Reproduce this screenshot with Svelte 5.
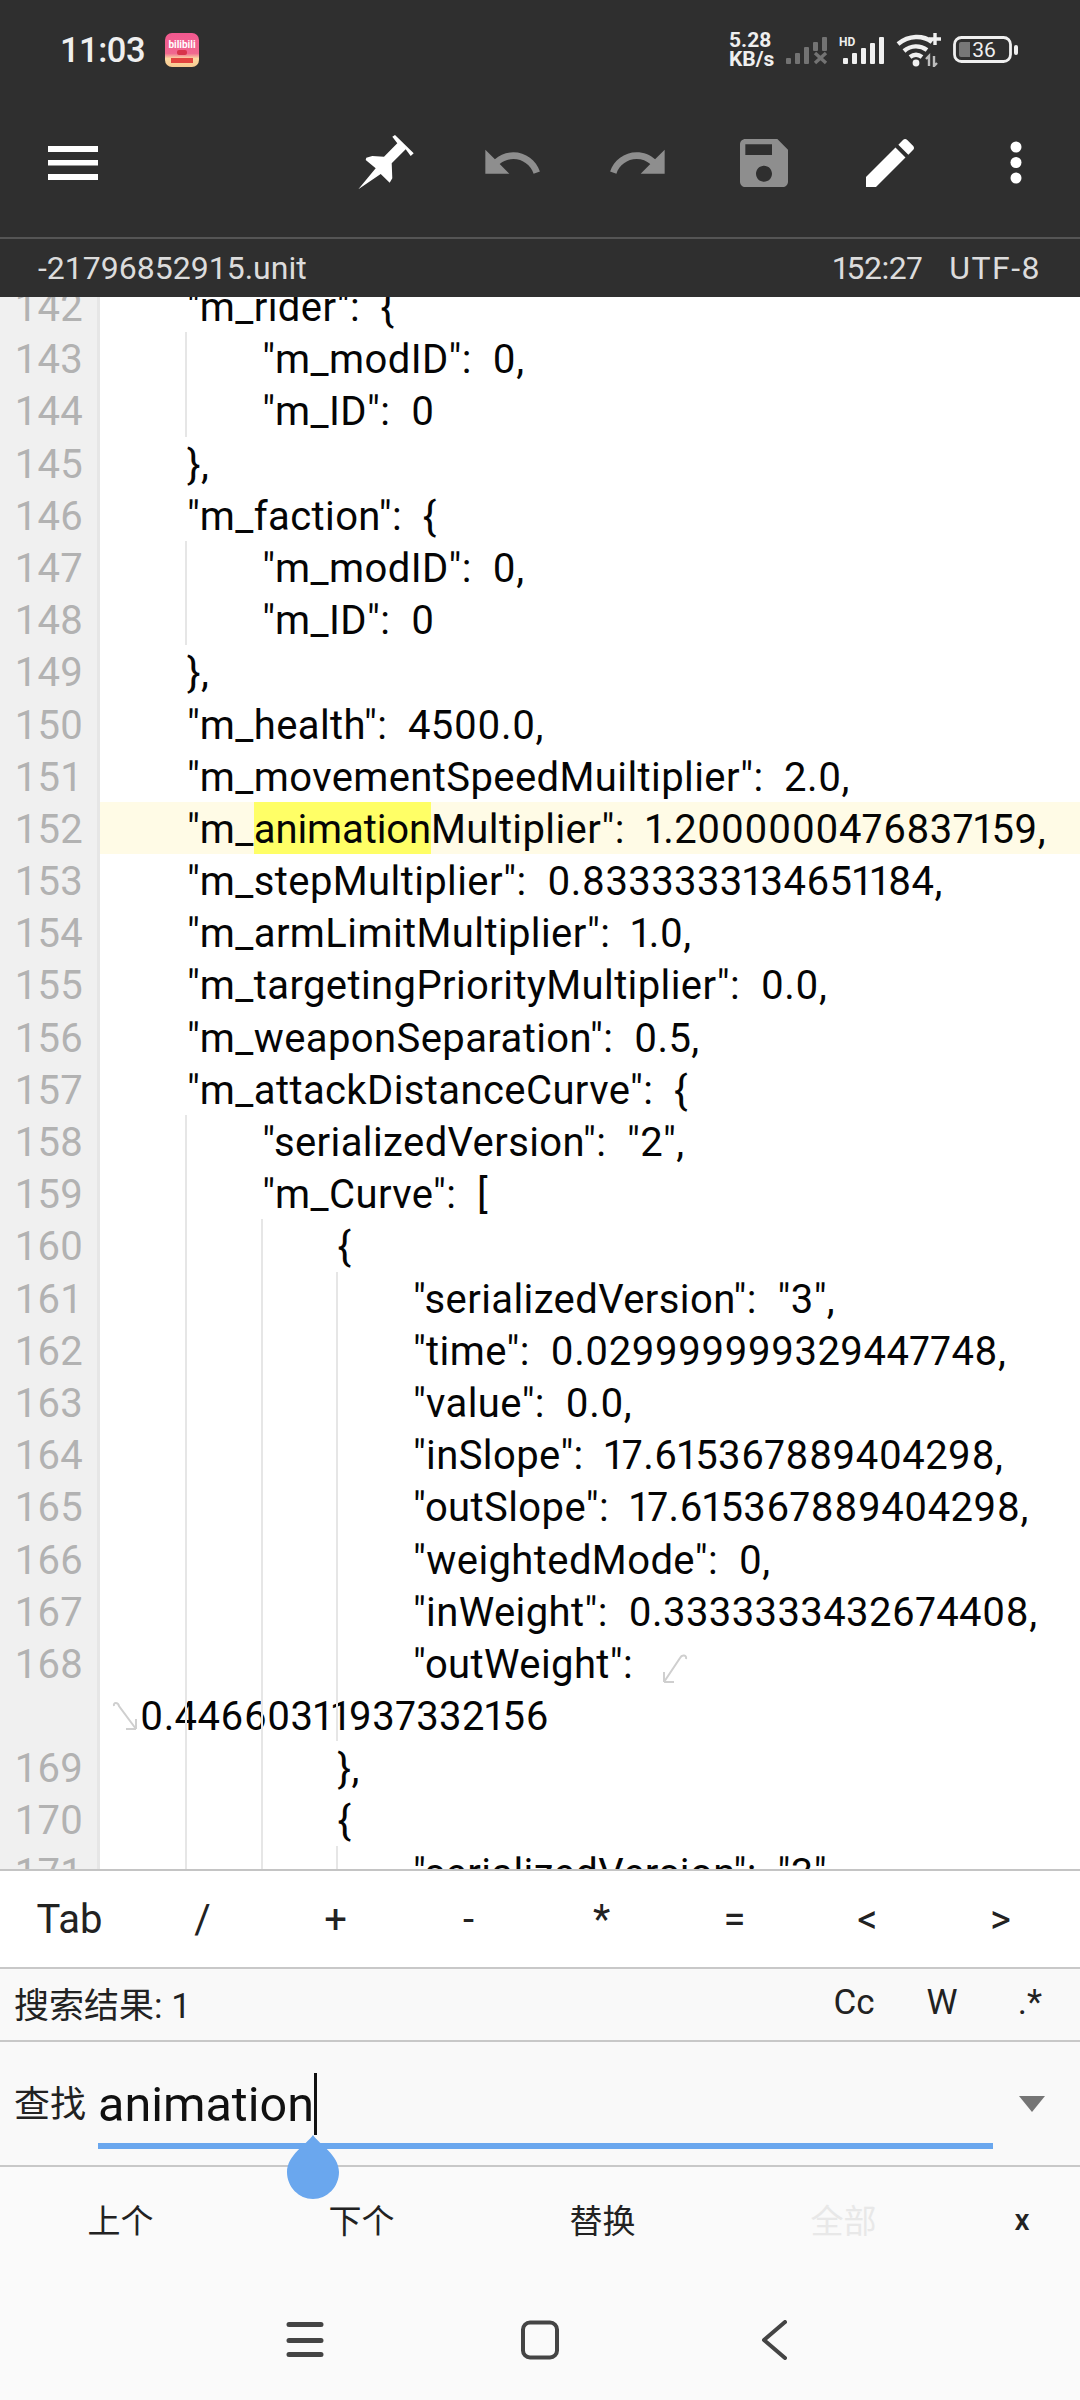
<script>
  const kw = (k, v) => `"${k}":  ${v}`;
  const rows = [
    { n: 142, l: 1, t: kw('m_rider', '{'), g: 0 },
    { n: 143, l: 2, t: kw('m_modID', '0,'), g: 1 },
    { n: 144, l: 2, t: kw('m_ID', '0'), g: 1 },
    { n: 145, l: 1, t: '},', g: 0 },
    { n: 146, l: 1, t: kw('m_faction', '{'), g: 0 },
    { n: 147, l: 2, t: kw('m_modID', '0,'), g: 1 },
    { n: 148, l: 2, t: kw('m_ID', '0'), g: 1 },
    { n: 149, l: 1, t: '},', g: 0 },
    { n: 150, l: 1, t: kw('m_health', '4500.0,'), g: 0 },
    { n: 151, l: 1, t: kw('m_movementSpeedMuiltiplier', '2.0,'), g: 0 },
    { n: 152, l: 1, pre: '"m_', hit: 'animation', t: 'Multiplier":  1.2000000476837159,', g: 0, active: true },
    { n: 153, l: 1, t: kw('m_stepMultiplier', '0.8333333134651184,'), g: 0 },
    { n: 154, l: 1, t: kw('m_armLimitMultiplier', '1.0,'), g: 0 },
    { n: 155, l: 1, t: kw('m_targetingPriorityMultiplier', '0.0,'), g: 0 },
    { n: 156, l: 1, t: kw('m_weaponSeparation', '0.5,'), g: 0 },
    { n: 157, l: 1, t: kw('m_attackDistanceCurve', '{'), g: 0 },
    { n: 158, l: 2, t: kw('serializedVersion', '"2",'), g: 1 },
    { n: 159, l: 2, t: kw('m_Curve', '['), g: 1 },
    { n: 160, l: 3, t: '{', g: 2 },
    { n: 161, l: 4, t: kw('serializedVersion', '"3",'), g: 3 },
    { n: 162, l: 4, t: kw('time', '0.029999999329447748,'), g: 3 },
    { n: 163, l: 4, t: kw('value', '0.0,'), g: 3 },
    { n: 164, l: 4, t: kw('inSlope', '17.615367889404298,'), g: 3 },
    { n: 165, l: 4, t: kw('outSlope', '17.615367889404298,'), g: 3 },
    { n: 166, l: 4, t: kw('weightedMode', '0,'), g: 3 },
    { n: 167, l: 4, t: kw('inWeight', '0.3333333432674408,'), g: 3 },
    { n: 168, l: 4, t: '"outWeight":  ', g: 3, wrapOut: true },
    { n: '', l: 0, t: '0.44660311937332156', g: 3, wrapIn: true },
    { n: 169, l: 3, t: '},', g: 2 },
    { n: 170, l: 3, t: '{', g: 2 },
    { n: 171, l: 4, t: kw('serializedVersion', '"3"'), g: 3 }
  ];
  const keys = ['Tab', '/', '+', '-', '*', '=', '<', '>'];
  const indent = 75.3;
</script>

<div class="screen">
  <header class="top">
    <div class="status">
      <div class="left">
        <span class="time">11:03</span>
        <svg class="bili" viewBox="0 0 34 34" aria-hidden="true">
          <defs>
            <linearGradient id="bg" x1="0" y1="0" x2="0" y2="1">
              <stop offset="0" stop-color="#f2588f" />
              <stop offset="0.6" stop-color="#f0688f" />
              <stop offset="0.75" stop-color="#fbd9a2" />
              <stop offset="1" stop-color="#f9c98f" />
            </linearGradient>
          </defs>
          <rect width="34" height="34" rx="7" fill="url(#bg)" />
          <text x="17" y="15" text-anchor="middle" class="bili-t">bilibili</text>
          <rect x="12" y="17" width="10" height="5" rx="2" fill="#d8344a" />
          <rect x="6" y="25" width="22" height="5" fill="#e2443f" />
        </svg>
      </div>
      <div class="right">
        <div class="speed"><span>5.28</span><span>KB/s</span></div>
        <svg class="sig" width="42" height="28" viewBox="0 0 42 28" aria-hidden="true">
          <g fill="#737373">
            <rect x="0" y="21" width="5" height="6" rx="1" />
            <rect x="9" y="16" width="5" height="11" rx="1" />
            <rect x="18" y="10" width="5" height="17" rx="1" />
            <rect x="27" y="5" width="5" height="9" rx="1" />
            <rect x="36" y="0" width="5" height="14" rx="1" />
          </g>
          <path d="M29 16l11 10M40 16L29 26" stroke="#737373" stroke-width="3.4" />
        </svg>
        <div class="hd">
          <span class="hd-t">HD</span>
          <svg width="42" height="28" viewBox="0 0 42 28" aria-hidden="true">
            <g fill="#f0f0f0">
              <rect x="0" y="21" width="5" height="6" rx="1" />
              <rect x="9" y="16" width="5" height="11" rx="1" />
              <rect x="18" y="11" width="5" height="16" rx="1" />
              <rect x="27" y="6" width="5" height="21" rx="1" />
              <rect x="36" y="0" width="5" height="27" rx="1" />
            </g>
          </svg>
        </div>
        <svg class="wifi" width="46" height="34" viewBox="0 0 46 34" aria-hidden="true">
          <g fill="none" stroke="#f0f0f0" stroke-width="4.4">
            <path d="M2 11C13 2 27 2 36 9" />
            <path d="M8 18C15 12 24 12 31 17" />
            <path d="M14 24c4-3 8-3 12 0" />
          </g>
          <circle cx="20" cy="30" r="3.4" fill="#f0f0f0" />
          <path d="M39 0v12M33 6h12" stroke="#f0f0f0" stroke-width="3.4" />
          <path d="M33 33V23l-3 3M38 23v10l3-3" fill="none" stroke="#bdbdbd" stroke-width="2.4" />
        </svg>
        <svg class="batt" width="66" height="28" viewBox="0 0 66 28" aria-hidden="true">
          <rect x="1.5" y="1.5" width="56" height="24" rx="7" fill="none" stroke="#f0f0f0" stroke-width="2.8" />
          <path d="M8 6h9v15H8a2 2 0 0 1-2-2V8a2 2 0 0 1 2-2z" fill="#777" />
          <text x="31" y="21" text-anchor="middle" class="batt-t">36</text>
          <rect x="61" y="9" width="4" height="10" rx="2" fill="#f0f0f0" />
        </svg>
      </div>
    </div>

    <nav class="toolbar">
      <button class="tb" aria-label="menu">
        <svg width="64" height="64" viewBox="0 0 64 64"><path d="M7 15h50v6H7zM7 29h50v5.500H7zM7 43h50v6H7z" fill="#fff" /></svg>
      </button>
      <div class="tb-group">
        <button class="tb" aria-label="pin">
          <svg width="64" height="64" viewBox="0 0 64 64"><path d="M4.300 58.300L21.700 37.300 11.700 29 12.300 26.700 18.300 25 30 25.700 43.300 12.300 38.300 5.700 41 4 59.700 22.300 56.700 25 51.700 18.300 37.700 32.300 38.300 47.300 35.700 51.700 26.700 43z" fill="#fff" /></svg>
        </button>
        <button class="tb" aria-label="undo">
          <svg width="64" height="64" viewBox="0 0 24 24"><path fill="#8e8e8e" d="M12.500 8c-2.650 0-5.050.99-6.900 2.600L2 7v9h9l-3.620-3.620c1.390-1.160 3.160-1.880 5.120-1.880 3.540 0 6.550 2.310 7.600 5.500l2.370-.78C21.080 11.030 17.150 8 12.500 8z" /></svg>
        </button>
        <button class="tb" aria-label="redo">
          <svg width="64" height="64" viewBox="0 0 24 24"><path fill="#8e8e8e" d="M18.400 10.600C16.550 8.990 14.150 8 11.500 8c-4.650 0-8.580 3.030-9.960 7.220L3.900 16c1.050-3.190 4.050-5.500 7.600-5.500 1.950 0 3.730.72 5.120 1.880L13 16h9V7l-3.600 3.600z" /></svg>
        </button>
        <button class="tb" aria-label="save">
          <svg width="64" height="64" viewBox="0 0 24 24"><path fill="#8e8e8e" d="M17 3H5c-1.110 0-2 .9-2 2v14c0 1.100.89 2 2 2h14c1.100 0 2-.9 2-2V7l-4-4zm-5 16c-1.660 0-3-1.340-3-3s1.340-3 3-3 3 1.340 3 3-1.340 3-3 3zm3-10H5V5h10v4z" /></svg>
        </button>
        <button class="tb" aria-label="edit">
          <svg width="64" height="64" viewBox="0 0 24 24"><path fill="#fff" d="M3 17.250V21h3.750L17.810 9.940l-3.750-3.750L3 17.250zM20.710 7.040c.39-.39.39-1.020 0-1.410l-2.340-2.340c-.39-.39-1.020-.39-1.410 0l-1.830 1.830 3.750 3.750 1.830-1.830z" /></svg>
        </button>
        <button class="tb" aria-label="more">
          <svg width="64" height="64" viewBox="0 0 64 64"><circle cx="32" cy="16" r="5.500" fill="#fff" /><circle cx="32" cy="31.500" r="5.500" fill="#fff" /><circle cx="32" cy="47" r="5.500" fill="#fff" /></svg>
        </button>
      </div>
    </nav>

    <div class="filebar">
      <span>-21796852915.unit</span>
      <div class="fileinfo"><span class="pos">152:27</span><span class="enc">UTF-8</span></div>
    </div>
  </header>

  <main class="editor">
    <div class="rows">
      {#each rows as r}
        <div class="row" class:active={r.active}>
          <div class="num">{r.n}</div>
          <div class="code" class:wrapped={r.wrapIn} style={r.wrapIn ? '' : `padding-left:${(r.l - 1) * indent + 87}px`}>
            {#each Array(r.g) as _, i}
              <span class="guide" style={`left:${85 + i * 75.6}px`}></span>
            {/each}
            {#if r.wrapIn}
              <svg class="wrap-in" width="26" height="30" viewBox="0 0 26 30" aria-hidden="true">
                <path d="M2 5c-1-4 4-4 5 0L24 28M24 28v-10M24 28H14" fill="none" stroke="#cfcfcf" stroke-width="2" />
              </svg>
            {/if}
            {#if r.pre}<span>{r.pre}</span><span class="hit">{r.hit}</span>{/if}<span>{r.t}</span>{#if r.wrapOut}<svg class="wrap-out" width="26" height="30" viewBox="0 0 26 30" aria-hidden="true">
                <path d="M24 5c1-4-4-5-6-1L2 28M2 28V18M2 28h10" fill="none" stroke="#cfcfcf" stroke-width="2" />
              </svg>{/if}
          </div>
        </div>
      {/each}
    </div>
  </main>

  <section class="keys">
    {#each keys as k}<span class="key">{k}</span>{/each}
  </section>

  <section class="result">
    <span>搜索结果: 1</span>
    <div class="opts"><span>Cc</span><span>W</span><span>.*</span></div>
  </section>

  <section class="find">
    <span class="find-label">查找</span>
    <div class="field">
      <span class="query">animation</span><span class="caret"></span>
    </div>
    <svg class="drop" width="26" height="16" viewBox="0 0 26 16" aria-hidden="true"><path d="M0 0h26L13 16z" fill="#757575" /></svg>
    <svg class="handle" width="52" height="64" viewBox="0 0 52 64" aria-hidden="true">
      <path d="M26 0C32 9 52 20 52 37 52 52 40 64 26 64S0 52 0 37C0 20 20 9 26 0z" fill="#6aa7ee" />
    </svg>
  </section>

  <section class="actions">
    <span>上个</span><span>下个</span><span>替换</span><span class="off">全部</span><span class="close">x</span>
  </section>

  <footer class="nav">
    <svg width="38" height="38" viewBox="0 0 38 38" aria-hidden="true"><path d="M3 4.500h32M3 20.500h32M3 34.500h32" stroke="#444" stroke-width="5" stroke-linecap="round" /></svg>
    <svg class="home" width="38" height="40" viewBox="0 0 38 40" aria-hidden="true"><rect x="2" y="2.500" width="34" height="35" rx="7" fill="none" stroke="#444" stroke-width="4" /></svg>
    <svg class="back" width="26" height="40" viewBox="0 0 26 40" aria-hidden="true"><path d="M24 2L3 20l21 18" fill="none" stroke="#444" stroke-width="4" stroke-linecap="round" stroke-linejoin="round" /></svg>
  </footer>
</div>

<style>
  :global(body) {
    margin: 0;
    background: #fafafa;
  }
  .screen {
    width: 1080px;
    height: 2400px;
    display: flex;
    flex-direction: column;
    overflow: hidden;
    font-family: Roboto, "Noto Sans CJK SC", sans-serif;
    color: #111;
  }
  .top {
    background: #2f2f2f;
    flex: none;
  }
  .status {
    height: 100px;
    display: flex;
    align-items: center;
    justify-content: space-between;
    padding: 0 61px 0 60px;
  }
  .left {
    display: flex;
    align-items: center;
    gap: 20px;
  }
  .time {
    font-size: 34.500px;
    font-weight: 500;
    color: #efefef;
    letter-spacing: -0.5px;
  }
  .bili {
    width: 34px;
    height: 34px;
  }
  .bili-t {
    font-size: 10px;
    font-weight: 700;
    fill: #fff;
    font-family: Roboto, sans-serif;
  }
  .right {
    display: flex;
    align-items: center;
    gap: 11px;
  }
  .speed {
    display: flex;
    flex-direction: column;
    font-size: 21px;
    font-weight: 700;
    line-height: 19px;
    color: #efefef;
    width: 46px;
    white-space: nowrap;
  }
  .sig {
    margin-top: 2px;
  }
  .hd {
    position: relative;
    margin-top: 2px;
    height: 28px;
  }
  .hd svg {
    display: block;
    margin-left: 4px;
  }
  .hd-t {
    position: absolute;
    left: 0;
    top: -2px;
    font-size: 12px;
    font-weight: 700;
    color: #efefef;
  }
  .batt-t {
    font-size: 21px;
    fill: #f0f0f0;
    font-family: Roboto, sans-serif;
  }
  .toolbar {
    height: 126px;
    padding: 0 1px 11px 10px;
    display: flex;
    justify-content: space-between;
    border-bottom: 2px solid #555;
  }
  .tb-group {
    display: flex;
  }
  .tb {
    width: 126px;
    height: 126px;
    padding: 0;
    border: 0;
    background: none;
    display: flex;
    align-items: center;
    justify-content: center;
  }
  .filebar {
    height: 58px;
    padding: 0 40px 0 38px;
    display: flex;
    justify-content: space-between;
    align-items: center;
    font-size: 32px;
    color: #dcdcdc;
  }
  .fileinfo {
    display: flex;
    gap: 27px;
  }
  .pos {
    font-variant-numeric: proportional-nums;
    letter-spacing: -0.5px;
  }
  .enc {
    letter-spacing: 1.5px;
    margin-right: -1px;
  }
  .editor {
    height: 1572px;
    flex: none;
    overflow: hidden;
    background: #fff;
    border-bottom: 2px solid #c4c4c4;
  }
  .rows {
    margin-top: -17px;
  }
  .row {
    display: flex;
    height: 52.2px;
    line-height: 55px;
    font-size: 40px;
  }
  .num {
    flex: none;
    box-sizing: border-box;
    width: 100px;
    padding-right: 14px;
    text-align: right;
    background: #f0f0f0;
    border-right: 3px solid #e6e6e6;
    color: #b2b2b2;
    letter-spacing: 0.25px;
  }
  .code {
    position: relative;
    flex: 1;
    min-width: 0;
    white-space: nowrap;
    color: #050505;
    letter-spacing: 0.4px;
    font-variant-numeric: proportional-nums;
  }
  .code span {
    white-space: pre;
  }
  .code.wrapped {
    padding-left: 40px;
  }
  .active .code {
    background: #fffbe6;
  }
  .hit {
    background: #ffff66;
    display: inline-block;
    height: 52px;
    letter-spacing: -0.1px;
  }
  .guide {
    position: absolute;
    top: 0;
    bottom: 0;
    width: 2px;
    background: #e6e6e6;
  }
  .wrap-in {
    position: absolute;
    left: 12px;
    top: 12px;
  }
  .wrap-out {
    vertical-align: -6px;
    margin-left: 8px;
  }
  .keys {
    height: 98px;
    flex: none;
    background: #fff;
    display: grid;
    grid-template-columns: repeat(8, 133px);
    padding-left: 3px;
    align-items: center;
    justify-items: center;
    font-size: 40px;
    border-bottom: 2px solid #c8c8c8;
    box-sizing: border-box;
    color: #222;
  }
  .result {
    height: 73px;
    flex: none;
    background: #f9f9f9;
    border-bottom: 2px solid #c8c8c8;
    box-sizing: border-box;
    padding: 0 6px 4px 14px;
    display: flex;
    align-items: center;
    justify-content: space-between;
    font-size: 35px;
    color: #222;
  }
  .opts {
    display: grid;
    grid-template-columns: repeat(3, 88px);
    justify-items: center;
  }
  .find {
    position: relative;
    height: 125px;
    flex: none;
    background: #f9f9f9;
    border-bottom: 2px solid #c8c8c8;
    box-sizing: border-box;
    display: flex;
    align-items: flex-start;
    padding: 0 35px 0 14px;
  }
  .find-label {
    width: 84px;
    flex: none;
    font-size: 36px;
    line-height: 44px;
    margin-top: 41px;
    color: #222;
  }
  .field {
    flex: 1;
    height: 101px;
    border-bottom: 6px solid #6aa7ee;
    display: flex;
    align-items: flex-start;
    margin-right: 26px;
  }
  .query {
    font-size: 48.500px;
    line-height: 62px;
    margin-top: 32px;
    color: #111;
  }
  .caret {
    width: 3px;
    height: 62px;
    margin-top: 31px;
    background: #111;
  }
  .drop {
    flex: none;
    margin-top: 54px;
  }
  .handle {
    position: absolute;
    left: 287px;
    top: 93px;
  }
  .actions {
    height: 110px;
    flex: none;
    box-sizing: border-box;
    padding-bottom: 6px;
    background: #fafafa;
    display: grid;
    grid-template-columns: repeat(4, 241px) 1fr;
    justify-items: center;
    align-items: center;
    font-size: 33px;
    color: #222;
  }
  .off {
    color: #e8e8e8;
  }
  .close {
    font-weight: 500;
    font-size: 30px;
  }
  .nav {
    flex: 1;
    background: #fafafa;
    display: flex;
    align-items: flex-start;
    padding: 43px 0 0 286px;
  }
  .home {
    margin-left: 197px;
  }
  .back {
    margin-left: 202px;
  }
</style>
